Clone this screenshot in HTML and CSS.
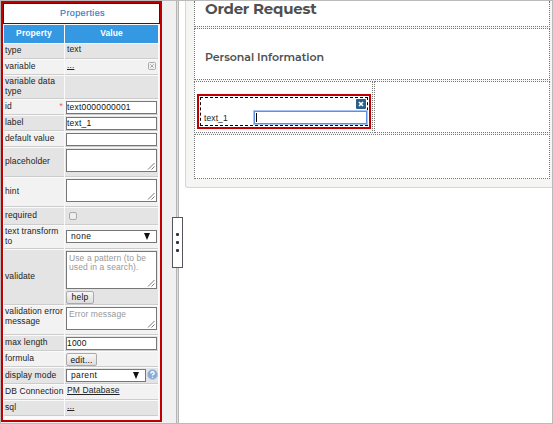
FILE: index.html
```html
<!DOCTYPE html>
<html lang="en">
<head>
<meta charset="utf-8">
<title>Order Request</title>
<link rel="stylesheet" href="styles.css">
</head>
<body>
<div class="app">
  <aside class="sidebar">
    <section class="panel">
      <h2 class="panel-title">Properties</h2>
      <div class="props">
        <div class="head">Property</div><div class="head">Value</div>
        <div class="cell dark">type</div><div class="cell dark val">text</div>
        <div class="cell">variable</div><div class="cell val split"><a>...</a><svg class="clear" viewBox="0 0 8 8"><rect x=".5" y=".5" width="7" height="7" rx="1"/><path d="M2.3 2.3l3.4 3.4M5.7 2.3L2.3 5.7"/></svg></div>
        <div class="cell dark two">variable data<br>type</div><div class="cell dark"></div>
        <div class="cell split"><span>id</span><span class="req">*</span></div><div class="cell field"><div class="input">text0000000001</div></div>
        <div class="cell dark">label</div><div class="cell dark field"><div class="input">text_1</div></div>
        <div class="cell">default value</div><div class="cell field"><div class="input"></div></div>
        <div class="cell dark">placeholder</div><div class="cell dark field"><div class="area"><svg class="grip" viewBox="0 0 8 8"><path d="M1 7.5L7.5 1M4.5 7.5L7.5 4.5"/></svg></div></div>
        <div class="cell">hint</div><div class="cell field"><div class="area"><svg class="grip" viewBox="0 0 8 8"><path d="M1 7.5L7.5 1M4.5 7.5L7.5 4.5"/></svg></div></div>
        <div class="cell dark">required</div><div class="cell dark check"><span class="box"></span></div>
        <div class="cell two">text transform<br>to</div><div class="cell field mid"><div class="select"><span>none</span><i class="arrow"></i></div></div>
        <div class="cell dark">validate</div><div class="cell dark field"><div class="area tall">Use a pattern (to be<br>used in a search).<svg class="grip" viewBox="0 0 8 8"><path d="M1 7.5L7.5 1M4.5 7.5L7.5 4.5"/></svg></div><button class="btn help">help</button></div>
        <div class="cell two">validation error<br>message</div><div class="cell field"><div class="area">Error message<svg class="grip" viewBox="0 0 8 8"><path d="M1 7.5L7.5 1M4.5 7.5L7.5 4.5"/></svg></div></div>
        <div class="cell dark">max length</div><div class="cell dark field"><div class="input">1000</div></div>
        <div class="cell">formula</div><div class="cell field"><button class="btn edit">edit...</button></div>
        <div class="cell dark">display mode</div><div class="cell dark field mode"><div class="select short"><span>parent</span><i class="arrow"></i></div><svg class="info" viewBox="0 0 10 10"><circle cx="5" cy="5" r="4.6" fill="#86abd6" stroke="#b9cbe2" stroke-width=".8"/><path d="M3.5 4Q3.5 2.5 5 2.5T6.5 4Q6.5 4.7 5 5.4V6M5 7v1" fill="none" stroke="#fff" stroke-width="1.2"/></svg></div>
        <div class="cell">DB Connection</div><div class="cell val"><a>PM Database</a></div>
        <div class="cell dark">sql</div><div class="cell dark val"><a>...</a></div>
      </div>
    </section>
  </aside>
  <div class="divider"><div class="handle"><i></i><i></i><i></i></div></div>
  <main class="canvas">
    <div class="form">
      <div class="row title-row"><h1>Order Request</h1></div>
      <div class="row sub-row"><h3>Personal Information</h3></div>
      <div class="row columns">
        <div class="slot">
          <div class="selected">
            <div class="widget">
              <svg class="close" viewBox="0 0 10 10"><rect width="10" height="10" rx="1" fill="#2b5f88"/><path d="M3 3l4 4M7 3L3 7" stroke="#fff" stroke-width="1.6"/></svg>
              <div class="control"><label>text_1</label><div class="text"><i class="caret"></i></div></div>
            </div>
          </div>
        </div>
        <div class="slot second"></div>
      </div>
      <div class="row last"></div>
    </div>
  </main>
</div>
</body>
</html>
```
FILE: styles.css
```css
* { box-sizing: border-box; }
body { margin: 0; font: 8.5px/10px "Liberation Sans", Arial, sans-serif; letter-spacing: .1px; color: #222; }
.app { width: 553px; height: 424px; display: flex; border: 1px solid #bbb; overflow: hidden; background: #fff; }
.sidebar { width: 175px; flex: none; background: #f0f0f0; }
.panel { width: 161px; height: 421px; border: 2px solid #c00000; background: #fafafa; padding: 0 1px; }
.panel-title { margin: 0 0 1px -1px; width: 157px; height: 21px; border: 1px solid #222; background: #fff; color: #3480c5; text-align: center; font-size: 9px; font-weight: normal; line-height: 18px; letter-spacing: .4px; padding-left: 2px; -webkit-text-stroke: .2px #3480c5; }
.props { display: grid; grid-template-columns: 60px 93px; gap: 1px; grid-template-rows: 18px 15px 15px 23px 15px 15px 15px 29px 29px 17px 23px 55px 29px 15px 15px 16px 15px 15px; }
.head { background: #3498e3; color: #fff; font-weight: bold; text-align: center; line-height: 16px; }
.cell { background: #f2f2f2; border-bottom: 1px solid #ccc; padding: 0 0 2px 1px; display: flex; align-items: center; white-space: nowrap; min-width: 0; min-height: 0; }
.dark { background: #e4e4e4; }
.val { padding: 0 2px; align-items: flex-start; }
.split { justify-content: space-between; }
.two { align-items: flex-start; }
a { text-decoration: underline; }
.clear { width: 8px; height: 8px; margin-top: 2px; fill: none; stroke: #aaa; stroke-width: 1; }
.req { color: #f55; padding-right: 1px; }
.field { padding: 1px 1px 0; align-items: flex-start; flex-wrap: wrap; }
.input { width: 91px; height: 13px; border: 1px solid #777; background: #fff; line-height: 11px; color: #111; letter-spacing: .2px; }
.area { width: 91px; height: 23px; border: 1px solid #777; background: #fff; position: relative; padding: 2px; line-height: 9px; color: #999; }
.tall { height: 38px; }
.grip { position: absolute; right: 1px; bottom: 1px; width: 8px; height: 8px; fill: none; stroke: #555; stroke-width: .8; }
.check { padding: 0 0 0 4px; }
.box { width: 8px; height: 8px; border: 1px solid #aaa; border-radius: 2px; background: #eee; }
.mid { align-content: flex-start; padding-top: 4px; }
.select { width: 91px; height: 13px; border: 1px solid #777; background: #fff; color: #111; display: flex; align-items: center; justify-content: space-between; padding: 0 6px 1px 4px; letter-spacing: .35px; }
.arrow { border: 3.5px solid transparent; border-top: 7px solid #111; border-bottom: 0; }
.btn { height: 13px; border: 1px solid #aaa; border-radius: 2px; padding: 0; background: linear-gradient(#f7f7f7, #ddd); font: inherit; letter-spacing: .2px; color: #111; line-height: 10px; }
.help { width: 28px; margin-top: 1px; }
.edit { width: 31px; }
.mode { flex-wrap: nowrap; justify-content: space-between; padding-right: 0; }
.short { width: 80px; }
.info { width: 11px; height: 11px; }
.divider { width: 3px; flex: none; border: solid #b5b5b5; border-width: 0 1px; background: #ddd; position: relative; }
.handle { position: absolute; left: -5px; top: 216px; width: 11px; height: 51px; border: 1px solid #555560; background: #fff; display: flex; flex-direction: column; justify-content: center; align-items: center; gap: 5px; }
.handle i { width: 3px; height: 3px; border-radius: 1px; background: #333340; }
.canvas { flex: 1; padding-left: 6px; min-width: 0; }
.form { height: 187px; border: 1px solid #d6d6d6; border-width: 0 0 1px 1px; border-radius: 0 0 0 3px; background: #f5f5f4; padding: 0 2px 8px 8px; color: #505050; }
.row { border: 1px dotted #777; background: #fff; margin-bottom: 1px; }
.title-row { height: 26px; border-top: 0; }
.sub-row { height: 52px; }
h1, h3 { font-family: Montserrat, Inter, sans-serif; font-weight: 700; margin: 0; }
h1 { font-size: 15px; line-height: 15px; padding-left: 10px; letter-spacing: -.25px; }
h3 { font-size: 11px; line-height: 14px; font-weight: 600; padding: 21px 0 0 10px; letter-spacing: -.05px; }
.columns { height: 52px; border: 0; display: flex; gap: 1px; }
.slot { width: 179px; border: 1px dotted #777; padding: 12px 0 0 2px; }
.second { flex: 1; }
.selected { width: 174px; height: 35px; border: 2px solid #c00000; padding: 1px; }
.widget { height: 29px; border: 1px dashed #000; padding: 1px 0 1px 1px; display: flex; flex-direction: column; align-items: flex-end; }
.close { width: 10px; height: 10px; margin-right: 1px; flex: none; }
.control { width: 100%; display: flex; justify-content: space-between; align-items: center; padding-left: 2px; margin-top: 2px; color: #222; }
.text { width: 113px; height: 13px; border: 1px solid #5b8fe8; box-shadow: 0 0 0 1px #a9c5f5; background: #fff; padding: 1px; }
.caret { display: block; width: 1px; height: 9px; background: #000; }
.last { height: 45px; margin: 0; }
```
